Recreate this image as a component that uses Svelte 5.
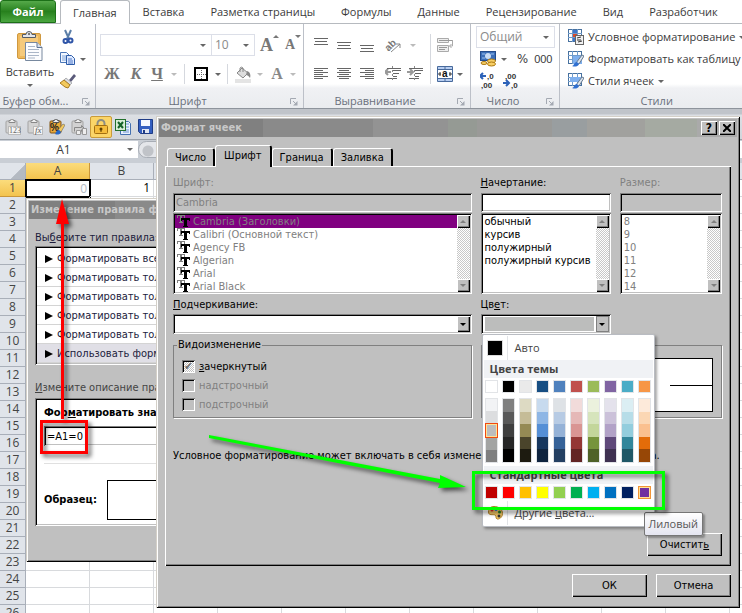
<script>
  const tabs = ["Главная", "Вставка", "Разметка страницы", "Формулы", "Данные", "Рецензирование", "Вид", "Разработчик"];
  const columns = ["A", "B", "C", "D", "E", "F", "G", "H", "I", "J", "K", "L"];
  const rows = Array.from({ length: 26 }, (_, i) => i + 1);

  const rules = [
    "Форматировать все",
    "Форматировать тол",
    "Форматировать тол",
    "Форматировать тол",
    "Форматировать тол",
    "Использовать форм",
  ];

  const dialogTabs = ["Число", "Шрифт", "Граница", "Заливка"];
  const fonts = ["Cambria (Заголовки)", "Calibri (Основной текст)", "Agency FB", "Algerian", "Arial", "Arial Black"];
  const styles = ["обычный", "курсив", "полужирный", "полужирный курсив"];
  const sizes = [8, 9, 10, 11, 12, 14];

  const theme = [
    ["#ffffff", "#f2f3f5", "#dcdddf", "#bcbdbd", "#a3a4a3", "#7f7f7f"],
    ["#000000", "#7f7f7f", "#595959", "#3f3f3f", "#262626", "#000000"],
    ["#eaeaea", "#dddac3", "#c5bc97", "#958a54", "#4a442b", "#1d1b10"],
    ["#174e83", "#c7daee", "#8eb6e5", "#558fd6", "#17375e", "#0f243f"],
    ["#4f81bd", "#dee2e6", "#b7cbe4", "#95b2d7", "#366298", "#244062"],
    ["#c0504d", "#f1dbda", "#e5b8b7", "#d99593", "#943735", "#632524"],
    ["#9bbb59", "#ebf1dd", "#d6e4bc", "#c3d69b", "#76943c", "#4f6228"],
    ["#8064a2", "#e4e2ec", "#cbc1d9", "#b2a2c7", "#5f497a", "#3f3151"],
    ["#4bacc6", "#dbeef3", "#b7dde8", "#93cddd", "#32869b", "#205867"],
    ["#f79646", "#fdeada", "#fbd7b4", "#fac08f", "#e36c09", "#974706"],
  ];
  const standard = ["#c00000", "#ff0000", "#ffc000", "#ffff00", "#92d050", "#00b050", "#00b0f0", "#0070c0", "#002060", "#7030a0"];

  let activeTab = "Шрифт";
  let formula = "=A1=0";
</script>

{#snippet launcher()}
  <button class="launcher" aria-label="Параметры">
    <svg width="8" height="8" viewBox="0 0 8 8"><path d="M0.500 6V0.500H6M3 3l3 3" fill="none" stroke="#a4a9b2" /><path d="M7.500 3v4.500H3z" fill="#a4a9b2" /></svg>
  </button>
{/snippet}

{#snippet lines(spans)}
  <svg width="14" height="16" viewBox="0 0 14 16" shape-rendering="crispEdges">
    {#each spans as [x, y, w]}
      <rect {x} {y} width={w} height="1" fill="#666" />
    {/each}
  </svg>
{/snippet}

{#snippet scrollbar()}
  <div class="scroll">
    <button tabindex="-1" aria-label="Вверх"><i class="tri up"></i></button>
    <button tabindex="-1" aria-label="Вниз"><i class="tri"></i></button>
  </div>
{/snippet}

{#snippet clipboard()}
  <rect x="1" y="2" width="11" height="12" rx="1" fill="#d2d2d2" stroke="#a3a3a3" />
  <path d="M4 3.500V1.500H5.500a1.500 1.500 0 0 1 3 0H10v2z" fill="#eee" stroke="#888" />
{/snippet}

<main>
  <nav class="tabs">
    <button class="file">Файл</button>
    {#each tabs as tab, i}
      <button class:current={i === 0}>{tab}</button>
    {/each}
  </nav>

  <section class="ribbon">
    <div class="group clip">
      <div class="body">
        <button class="paste">
          <svg width="26" height="32" viewBox="0 0 26 32">
            <rect x="0.500" y="3.500" width="23" height="25" rx="1.500" fill="#efb95c" stroke="#cf983f" />
            <rect x="3" y="6" width="18" height="20" fill="#f5ca7c" />
            <path d="M5.500 7.500v-3H9a3 3 0 0 1 6 0h3.500v3z" fill="#e3e6ea" stroke="#555c66" />
            <circle cx="12" cy="4" r="1" fill="#555" />
            <path d="M8.500 12.500H20l5 5v13H8.500z" fill="#fbfcfe" stroke="#78899f" />
            <path d="M20 12.500v5h5" fill="#d6deea" stroke="#5c7394" />
            <path d="M11 16.500h7M11 19.500h11M11 22.500h11M11 25.500h11M11 28h7" stroke="#aab6c8" />
          </svg>
          <span>Вставить</span>
          <i class="arr"></i>
        </button>
        <div class="mini">
          <button aria-label="Вырезать">
            <svg width="16" height="16" viewBox="0 0 16 16">
              <path d="M5 1l4 9M11 1l-4 9" stroke="#5c7fa8" stroke-width="2" />
              <circle cx="5.500" cy="12" r="2" fill="none" stroke="#2f55a8" stroke-width="2" />
              <circle cx="10.500" cy="11.500" r="2" fill="none" stroke="#2f55a8" stroke-width="2" />
            </svg>
          </button>
          <button aria-label="Копировать">
            <svg width="16" height="16" viewBox="0 0 16 16">
              <path d="M0.500 1.500h6l3 3v7h-9z" fill="#f2f7ff" stroke="#4b77b8" />
              <path d="M2 5h5M2 7h5M2 9h4" stroke="#7da2d8" />
              <path d="M6.500 4.500h5l3 3v6h-8z" fill="#dfeaff" stroke="#2d5ca8" />
              <path d="M8 8h4M8 10h5M8 12h5" stroke="#4b77c8" />
            </svg>
            <i class="arr"></i>
          </button>
          <button aria-label="Формат по образцу">
            <svg width="16" height="16" viewBox="0 0 16 16">
              <path d="M9 7l5-6 2 2-5 6z" fill="#5a5a7a" />
              <path d="M6 5l6 5-2 2-6-5z" fill="#d8dbe2" stroke="#777" stroke-width="0.500" />
              <path d="M4 7l6 5-2 3-3-1-5-4z" fill="#f2c95c" stroke="#a87a22" />
            </svg>
          </button>
        </div>
      </div>
      <h2>Буфер обм...{@render launcher()}</h2>
    </div>

    <div class="group font">
      <div class="body">
        <div class="line">
          <label class="box name"><select aria-label="Шрифт"><option></option></select><i class="arr"></i></label>
          <label class="box size"><select aria-label="Размер"><option>10</option></select><i class="arr"></i></label>
          <button class="serif big" aria-label="Увеличить размер">A<sup></sup></button>
          <button class="serif small" aria-label="Уменьшить размер">A<sup class="down"></sup></button>
        </div>
        <div class="line second">
          <button class="serif w28">Ж</button>
          <button class="serif w20"><em>К</em></button>
          <button class="serif w22"><u>Ч</u></button>
          <button class="w12 pale" aria-label="Подчеркивание"><i class="arr"></i></button>
          <hr />
          <button class="w24" aria-label="Границы">
            <svg width="14" height="14" viewBox="0 0 14 14" shape-rendering="crispEdges">
              <rect x="1" y="1" width="12" height="12" fill="#fff" stroke="#000" stroke-width="2" />
              <path d="M7.500 3v9M3 7.500h9" stroke="#666" stroke-dasharray="1 1" />
            </svg>
          </button>
          <button class="w10" aria-label="Вид границы"><i class="arr"></i></button>
          <hr />
          <button class="w22" aria-label="Заливка">
            <svg width="17" height="17" viewBox="0 0 17 17">
              <rect x="0" y="13" width="16" height="4" fill="#e4e4e4" />
              <path d="M2 7l5-5 6 5-5 5z" fill="#ddd" stroke="#888" />
              <path d="M5 6V2a2 2 0 0 1 3 0v4" fill="none" stroke="#888" />
              <path d="M12 5c3 1 4 4 3 7-1-2-3-3-4-3z" fill="#888" />
            </svg>
          </button>
          <button class="w12 pale" aria-label="Цвет заливки"><i class="arr"></i></button>
          <button class="serif w22 gray">A</button>
          <button class="w10 pale" aria-label="Цвет текста"><i class="arr"></i></button>
        </div>
      </div>
      <h2>Шрифт{@render launcher()}</h2>
    </div>

    <div class="group align">
      <div class="body">
        <div class="cluster">
          <div class="line">
            <button aria-label="По верхнему краю">{@render lines([[0, 1, 14], [1, 4, 12], [0, 7, 14]])}</button>
            <button aria-label="Посередине">{@render lines([[0, 5, 14], [1, 8, 12], [0, 11, 14]])}</button>
            <button aria-label="По нижнему краю">{@render lines([[0, 8, 14], [1, 11, 12], [0, 14, 14]])}</button>
            <button class="orient" aria-label="Ориентация">
              <svg width="16" height="16" viewBox="0 0 16 16">
                <text x="0" y="12" transform="rotate(-45 5 9)" font-family="Liberation Sans" font-size="10" font-weight="bold" fill="#777">ab</text>
                <path d="M6 15l9-8M11 7h4v4" fill="none" stroke="#888" />
              </svg>
            </button>
            <button class="pale" aria-label="Вид ориентации"><i class="arr"></i></button>
          </div>
          <div class="line second">
            <button aria-label="По левому краю">{@render lines([[0, 2, 14], [0, 4, 9], [0, 6, 14], [0, 8, 9], [0, 10, 14], [0, 12, 9]])}</button>
            <button aria-label="По центру">{@render lines([[0, 2, 14], [2, 4, 10], [0, 6, 14], [2, 8, 10], [0, 10, 14], [2, 12, 10]])}</button>
            <button aria-label="По правому краю">{@render lines([[0, 2, 14], [5, 4, 9], [0, 6, 14], [5, 8, 9], [0, 10, 14], [5, 12, 9]])}</button>
            {#each ["M6 6H0m3-3L0 6l3 3", "M0 6h6M3 3l3 3-3 3"] as d}
              <button aria-label="Отступ">
                <svg width="16" height="16" viewBox="0 0 16 16">
                  <path {d} fill="none" stroke="#999" stroke-width="2" />
                  <path d="M2 2.500h14M8 4.500h8M8 7.500h6M8 10.500h4M2 12.500h10" stroke="#666" />
                  <path d="M7.500 0v16" stroke="#888" stroke-dasharray="2 2" />
                </svg>
              </button>
            {/each}
          </div>
        </div>
        <hr />
        <div class="cluster last">
          <div class="line">
            <button aria-label="Перенос текста">
              <svg width="17" height="16" viewBox="0 0 17 16">
                <path d="M0.500 1.500h11v4H.5zM0.500 8.500h11v6H.5z" fill="#eee" stroke="#aaa" />
                <path d="M2 3.500h13M2 10.500h8M2 12.500h6" stroke="#999" />
                <path d="M15.500 3v6h-3m2-2l-2 2 2 2" fill="none" stroke="#aaa" />
              </svg>
            </button>
          </div>
          <div class="line second">
            <button aria-label="Объединить">
              <svg width="16" height="16" viewBox="0 0 16 16">
                <path d="M0.500 0.500h15v15H.5z" fill="#b7cdf0" stroke="#486a9c" />
                <path d="M0 3.500h16M0 12.500h16M8 1v3M8 13v3" stroke="#486a9c" />
                <rect x="1" y="4" width="14" height="8" fill="#fff" />
                <text x="5" y="11" font-family="Liberation Sans" font-size="10" font-weight="bold" fill="#111">a</text>
                <path d="M1 8h3M12 8h3M3 6v4M13 6v4" stroke="#333" />
              </svg>
              <i class="arr"></i>
            </button>
          </div>
        </div>
      </div>
      <h2>Выравнивание{@render launcher()}</h2>
    </div>

    <div class="group number">
      <div class="body">
        <label class="box"><select aria-label="Формат"><option>Общий</option></select><i class="arr"></i></label>
        <div class="line">
          <button aria-label="Денежный">
            <svg width="17" height="16" viewBox="0 0 17 16">
              <rect x="0.500" y="0.500" width="15" height="9" fill="#3d70ba" stroke="#244c8c" />
              <circle cx="8" cy="5" r="3" fill="#c9dcf5" /><path d="M2 3h3M11 3h3M2 7h3" stroke="#9cc0ee" />
              <ellipse cx="11.500" cy="10" rx="4" ry="2" fill="#f7ce65" stroke="#ad7a14" />
              <ellipse cx="11.500" cy="13" rx="4" ry="2" fill="#f7ce65" stroke="#ad7a14" />
              <ellipse cx="4" cy="12" rx="3" ry="1.500" fill="#f7ce65" stroke="#ad7a14" />
            </svg>
            <i class="arr"></i>
          </button>
          <button class="pct">%</button>
          <button class="pct">000</button>
        </div>
        <div class="line">
          {#each [["M6 4H0m3-3L0 4l3 3", 7, 7, ",0", 1, 16, ",00"], ["M6 11H0m3-3l3 3-3 3", 2, 7, ",00", 8, 16, ",0"]] as [d, x1, y1, t1, x2, y2, t2]}
            <button aria-label="Разрядность">
              <svg width="17" height="18" viewBox="0 0 17 18" font-family="Liberation Sans" font-size="8" font-weight="bold" fill="#333">
                <path {d} fill="none" stroke="#2c62b8" stroke-width="2" />
                <text x={x1} y={y1}>{t1}</text><text x={x2} y={y2}>{t2}</text>
              </svg>
            </button>
          {/each}
        </div>
      </div>
      <h2>Число{@render launcher()}</h2>
    </div>

    <div class="group styles">
      <div class="body">
        {#each ["Условное форматирование", "Форматировать как таблицу", "Стили ячеек"] as label, i}
          <button>
            <svg width="16" height="16" viewBox="0 0 16 16">
              <rect x="0.500" y="0.500" width="13" height="12" fill="#fff" stroke="#47719f" />
              <path d="M0 4.500h14M0 8.500h14M4.500 0v13M9.500 0v13" stroke="#6f9bcb" />
              {#if i === 0}
                <path d="M5 1h4v3H5zM5 9h4v3H5z" fill="#3f75c8" /><path d="M5 5h4v3H5z" fill="#dd4a2a" />
                <rect x="7.500" y="6.500" width="8" height="9" fill="#f2f2f2" stroke="#666" />
                <path d="M9 9l4-1M9 11h4M10 13l4-1" stroke="#333" />
              {:else}
                <path d={i === 1 ? "M5 5h9v8H5z" : "M2 4h11v5H2z"} fill="#7fb0ee" />
                <path d="M8 12l6-8 2 1-5 8z" fill="#dce5f0" stroke="#66788c" />
                <path d="M4 15c2 0 2-4 5-4l2 2c-1 3-5 3-7 2z" fill="#2f6fd0" />
              {/if}
            </svg>
            {label}
            {#if i !== 1}<i class="arr"></i>{/if}
          </button>
        {/each}
      </div>
      <h2>Стили</h2>
    </div>
  </section>

  <section class="quick">
    <button aria-label="Вставить значения">
      <svg width="16" height="16" viewBox="0 0 16 16">{@render clipboard()}<rect x="3.500" y="7.500" width="12" height="8" fill="#f5f5f5" stroke="#bbb" /><text x="4" y="14" font-family="Liberation Serif" font-size="8" fill="#666">123</text></svg>
    </button>
    <button aria-label="Вставить формулы">
      <svg width="16" height="16" viewBox="0 0 16 16">{@render clipboard()}<rect x="6.500" y="7.500" width="9" height="8" fill="#f5f5f5" stroke="#bbb" /><text x="8" y="14" font-family="Liberation Serif" font-style="italic" font-size="9" fill="#555">fx</text></svg>
    </button>
    <button aria-label="Вставить форматы">
      <svg width="16" height="16" viewBox="0 0 16 16">
        <rect x="1" y="2" width="11" height="12" rx="1" fill="#e8a93a" stroke="#80551a" />
        <path d="M4 3.500V1.500H5.500a1.500 1.500 0 0 1 3 0H10v2z" fill="#eee" stroke="#555" />
        <text x="1" y="12" font-family="Liberation Sans" font-size="10" font-weight="bold" fill="#222">%</text>
        <path d="M9 11l5-6 2 1-4 7z" fill="#f3ca60" stroke="#555" stroke-width="0.500" /><path d="M6 15c1-1 1-4 4-4l2 2c-1 3-4 3-6 2z" fill="#2768c8" />
      </svg>
    </button>
    <button aria-label="Транспонировать">
      <svg width="16" height="16" viewBox="0 0 16 16">{@render clipboard()}<path d="M3.500 12.500v-4h7v-2l3 3-3 3v-2" fill="none" stroke="#888" /><path d="M5.500 11.500h4v4h-4zM11.500 9.500h4v6h-4z" fill="#eee" stroke="#999" /></svg>
    </button>
    <button class="on" aria-label="Защита">
      <svg width="14" height="16" viewBox="0 0 14 16">
        <path d="M3.500 7V4.500a3.500 3.500 0 0 1 7 0V7" fill="none" stroke="#8d8d84" stroke-width="2" />
        <rect x="0.500" y="6.500" width="13" height="8" rx="1" fill="#f5bd3c" stroke="#a36f10" /><circle cx="7" cy="10" r="1.500" fill="#604000" /><path d="M7 10v3" stroke="#604000" />
      </svg>
    </button>
    <button aria-label="Книга">
      <svg width="17" height="16" viewBox="0 0 17 16">
        <path d="M5.500 2.500h8l2 2v11h-10z" fill="#e8f0ff" stroke="#4470b0" /><path d="M8 5h6M8 8h6M8 11h6M8 13h6" stroke="#6d93cf" />
        <rect x="0.500" y="0.500" width="10" height="11" fill="#d7edd7" stroke="#23702c" /><path d="M3 3l5 6M8 3L3 9" stroke="#16642a" stroke-width="2" />
      </svg>
    </button>
    <button aria-label="Сохранить">
      <svg width="15" height="15" viewBox="0 0 15 15"><path d="M0.500 0.500h14v14h-12l-2-2z" fill="#345fc0" stroke="#1f3c86" /><rect x="3" y="1" width="9" height="6" fill="#f5f8ff" /><rect x="4" y="10" width="7" height="4" fill="#dfe5f2" /><rect x="5" y="11" width="2" height="3" fill="#1f3c86" /></svg>
    </button>
  </section>

  <section class="formula-bar">
    <label class="cell-name"><input value="A1" aria-label="Имя ячейки" /><i class="arr"></i></label>
    <span class="knob"></span>
    <input class="entry" aria-label="Строка формул" />
  </section>

  <div class="sheet">
    <table>
      <thead>
        <tr><th class="corner"></th>{#each columns as c}<th class:sel={c === "A"}>{c}</th>{/each}</tr>
      </thead>
      <tbody>
        {#each rows as r}
          <tr>
            <th class:sel={r === 1}>{r}</th>
            {#each columns as c}
              <td class:cursor={r === 1 && c === "A"}>{r !== 1 ? "" : c === "A" ? "0" : c === "B" ? "1" : ""}</td>
            {/each}
          </tr>
        {/each}
      </tbody>
    </table>
  </div>

  <section class="window rule">
    <header>Изменение правила ф</header>
    <div class="rule-body">
      <p>Вы<u>б</u>ерите тип правила:</p>
      <ul class="sunken">
        {#each rules as rule, i}
          <li class:picked={i === 5}><i></i>{rule}</li>
        {/each}
      </ul>
      <p class="second-title"><u>И</u>змените описание прав</p>
      <div class="sunken describe">
        <label for="formula">Фор<u>м</u>атировать зна</label>
        <input id="formula" class="sunken" bind:value={formula} />
        <div class="preview"><span>Образец:</span><div class="sample"></div></div>
      </div>
    </div>
  </section>

  <section class="window format">
    <header>
      <span>Формат ячеек</span>
      <button class="raised" aria-label="Справка">?</button>
      <button class="raised" aria-label="Закрыть"><svg width="8" height="8" viewBox="0 0 8 8"><path d="M0 0l8 8M8 0L0 8" stroke="#000" stroke-width="2" /></svg></button>
    </header>

    <div class="tablist">
      {#each dialogTabs as tab}
        <button class:active={tab === activeTab} on:click={() => (activeTab = tab)}>{tab}</button>
      {/each}
    </div>

    <div class="panel raised">
      <div class="fields">
        <div class="field off">
          <label for="font">Шрифт:</label>
          <input id="font" class="sunken" value="Cambria" disabled />
          <div class="list sunken">
            <ul>
              {#each fonts as f, i}
                <li class:marked={i === 0}>
                  <svg width="13" height="12" viewBox="0 0 13 12" shape-rendering="crispEdges">
                    <path d="M0 0h8v3H7V1H5v6h1v1H2V7h1V1H1v2H0z" fill="#808080" />
                    <path d="M4 3h9v3h-1V5h-2v6h1v1H6v-1h1V5H5v1H4z" fill="#000" />
                  </svg>{f}
                </li>
              {/each}
            </ul>
            {@render scrollbar()}
          </div>
        </div>

        <div class="field">
          <label for="style"><u>Н</u>ачертание:</label>
          <input id="style" class="sunken" />
          <div class="list sunken">
            <ul>{#each styles as s}<li>{s}</li>{/each}</ul>
            {@render scrollbar()}
          </div>
        </div>

        <div class="field off">
          <label for="size">Размер:</label>
          <input id="size" class="sunken" disabled />
          <div class="list sunken">
            <ul>{#each sizes as s}<li>{s}</li>{/each}</ul>
            {@render scrollbar()}
          </div>
        </div>

        <div class="field">
          <label for="underline"><u>П</u>одчеркивание:</label>
          <div class="combo sunken">
            <select id="underline"><option></option></select>
            <span class="drop raised"><i class="tri"></i></span>
          </div>
        </div>

        <div class="field color">
          <label for="color">Цв<u>е</u>т:</label>
          <button id="color" class="combo sunken" aria-label="Цвет">
            <span class="chip"></span>
            <span class="drop flat"><i class="tri"></i></span>
          </button>

          <div class="palette">
            <button class="auto"><span class="icon"><i class="black"></i></span>Авто</button>
            <h3>Цвета темы</h3>
            <div class="swatches">
              {#each theme as shades}
                <button class="swatch" style="background: {shades[0]}" aria-label={shades[0]}></button>
              {/each}
            </div>
            <div class="swatches shades">
              {#each theme as shades, i}
                <div>
                  {#each shades.slice(1) as shade, k}
                    <button class:chosen={i === 0 && k === 2} style="background: {shade}" aria-label={shade}></button>
                  {/each}
                </div>
              {/each}
            </div>
            <h3>Стандартные цвета</h3>
            <div class="swatches">
              {#each standard as color, i}
                <button class="swatch" class:hover={i === 9} style="background: {color}" aria-label={color}></button>
              {/each}
            </div>
            <button class="more">
              <span class="icon">
                <svg width="15" height="14" viewBox="0 0 15 14"><path d="M6 .5c5 0 8.500 3 8.500 7S11 13.500 9 13c-2-1 0-3-2-4S.5 10 .5 6 3 .5 6 .5z" fill="#f3c766" stroke="#b1842c" /><circle cx="4" cy="4" r="1.500" fill="#d22" /><circle cx="8" cy="3.500" r="1.500" fill="#236bd0" /><circle cx="11.500" cy="6" r="1.500" fill="#282" /><circle cx="11" cy="10" r="1.500" fill="#333" /></svg>
              </span>
              <span>Другие <u>ц</u>вета...</span>
            </button>
            <span class="tooltip">Лиловый</span>
          </div>
        </div>
      </div>

      <div class="fields frames">
        <fieldset>
          <legend>Видоизменение</legend>
          <label><input type="checkbox" class="mixed" checked /><span><u>з</u>ачеркнутый</span></label>
          <label class="off"><input type="checkbox" disabled /><span>надстрочный</span></label>
          <label class="off"><input type="checkbox" disabled /><span>подстрочный</span></label>
        </fieldset>
        <fieldset class="view"><div><i></i></div></fieldset>
      </div>

      <p class="note">Условное форматирование может включать в себя изменение шрифта, начертания и цвета.</p>
      <div class="actions"><button class="raised">Очистит<u>ь</u></button></div>
    </div>

    <footer>
      <button class="raised">ОК</button>
      <button class="raised">Отмена</button>
    </footer>
  </section>

  <svg class="marks" width="742" height="613" viewBox="0 0 742 613">
    <g fill="#f00">
      <path d="M61 419V224h-5l6-25 7 25h-5v195z" />
      <rect x="41.500" y="421.500" width="45" height="31" fill="none" stroke="#f00" stroke-width="3" />
    </g>
    <g fill="#0f0">
      <path d="M209 435l231 44v-4l26 12-28 1 2-5-231-45z" />
      <rect x="473.500" y="472.500" width="190" height="36" fill="none" stroke="#0f0" stroke-width="3" />
    </g>
  </svg>
</main>

<style>
  :global(body) {
    margin: 0;
  }

  main {
    position: relative;
    height: 100vh;
    overflow: hidden;
    display: flex;
    flex-direction: column;
    background: #fff;
    font: 11px/16px "Open Sans", "Noto Sans", sans-serif;
    color: #3b3b3b;
  }

  main * {
    box-sizing: border-box;
  }

  button,
  input,
  select {
    font: inherit;
    color: inherit;
    margin: 0;
    padding: 0;
    border: 0;
    background: none;
    border-radius: 0;
    outline: 0;
  }

  select {
    appearance: none;
    width: 100%;
    height: 100%;
  }

  ul,
  p,
  h2,
  h3 {
    margin: 0;
    padding: 0;
    list-style: none;
    font-weight: normal;
  }

  svg {
    display: block;
    flex: none;
  }

  .arr {
    flex: none;
    border: 3px solid transparent;
    border-top-color: #666;
    border-bottom: 0;
  }

  .pale .arr {
    border-top-color: #bbb;
  }

  /* ribbon tabs */
  .tabs {
    display: flex;
    flex: none;
    height: 24px;
    border-bottom: 1px solid #b6babf;
    white-space: nowrap;
  }

  .tabs button {
    flex: none;
    padding: 0 13px;
    height: 24px;
  }

  .tabs .file {
    width: 56px;
    padding: 0;
    margin-right: 4px;
    height: 23px;
    border: 1px solid #1c7018;
    border-radius: 3px 3px 0 0;
    background: linear-gradient(#55a94a, #27801d 50%, #4aa640);
    color: #fff;
    font-weight: bold;
  }

  .tabs .current {
    padding: 0 12px;
    border: 1px solid #b6babf;
    border-bottom: 0;
    border-radius: 3px 3px 0 0;
    background: #fff;
  }

  .ribbon {
    display: flex;
    flex: none;
    height: 85px;
    border-bottom: 1px solid #8e949c;
    background: linear-gradient(#fff 60px, #f0f1f4 64px, #eaecef);
    white-space: nowrap;
  }

  .group {
    flex: none;
    display: flex;
    flex-direction: column;
    border-right: 1px solid #bcc0c8;
  }

  .clip {
    width: 96px;
  }

  .font {
    width: 208px;
  }

  .align {
    width: 167px;
  }

  .number {
    width: 89px;
  }

  .styles {
    flex: 1;
    border: 0;
  }

  .group .body {
    flex: none;
    height: 68px;
  }

  .group h2 {
    position: relative;
    padding: 1px 24px 0 0;
    font-size: 11px;
    text-align: center;
    color: #6a707c;
  }

  .styles h2 {
    padding-left: 24px;
  }

  .group.styles h2 {
    padding-right: 8px;
    padding-left: 16px;
  }

  .launcher {
    position: absolute;
    right: 5px;
    top: 6px;
  }

  .clip .body {
    display: flex;
  }

  .paste {
    width: 60px;
    padding-top: 6px;
    display: flex;
    flex-direction: column;
    align-items: center;
    gap: 2px;
  }

  .paste .arr {
    margin-top: 2px;
  }

  .mini {
    display: flex;
    flex-direction: column;
    gap: 6px;
    padding-top: 5px;
  }

  .mini button {
    display: flex;
    align-items: center;
    gap: 4px;
  }

  .line {
    display: flex;
    align-items: center;
  }

  .line button {
    display: flex;
    align-items: center;
    justify-content: center;
  }

  .font .line {
    height: 22px;
    margin-top: 10px;
    padding-left: 4px;
  }

  .font .second {
    margin-top: 7px;
    padding-left: 2px;
  }

  .box {
    display: flex;
    flex: none;
    align-items: center;
    height: 22px;
    padding: 0 5px 0 3px;
    border: 1px solid #dcdfe8;
    background: #fff;
    color: #8a8a8a;
    font-size: 12px;
  }

  .box.name {
    width: 112px;
  }

  .box.size {
    width: 43px;
    border-left: 0;
  }

  .serif {
    position: relative;
    font: bold 16px/20px "Liberation Serif", serif;
    color: #777;
  }

  .serif.gray {
    color: #888;
  }

  .serif sup {
    align-self: flex-start;
    border: 3px solid transparent;
    border-top: 0;
    border-bottom-color: #777;
  }

  .serif sup.down {
    border-top: 3px solid #777;
    border-bottom: 0;
  }

  .serif.big {
    font-size: 18px;
    margin-left: 5px;
  }

  .serif.small {
    font-size: 14px;
    margin-left: 6px;
  }

  .w10 {
    width: 10px;
  }

  .w12 {
    width: 12px;
  }

  .w20 {
    width: 20px;
  }

  .w22 {
    width: 22px;
  }

  .w24 {
    width: 24px;
  }

  .w28 {
    width: 28px;
  }

  hr {
    flex: none;
    width: 1px;
    height: 20px;
    margin: 0 4px;
    border: 0;
    background: #d5d8de;
  }

  .align .body {
    display: flex;
    padding: 10px 0 0 10px;
  }

  .align .line {
    gap: 9px;
    height: 22px;
  }

  .align .second {
    gap: 9px;
    margin-top: 7px;
  }

  .align .orient {
    margin-left: 2px;
  }

  .align .second button:nth-child(4) {
    margin-left: 2px;
  }

  .align .second button:nth-child(5) {
    margin-left: -3px;
  }

  .align hr {
    height: 50px;
    margin: 0 6px 0 7px;
  }

  .align .last button {
    gap: 4px;
  }

  .number .body {
    display: flex;
    flex-direction: column;
    padding: 2px 4px 0 5px;
  }

  .number .line {
    flex: none;
    height: 22px;
    padding-left: 4px;
    gap: 6px;
  }

  .number .line button {
    gap: 4px;
  }

  .number .line .pct {
    margin-left: 4px;
    font: 13px/16px "DejaVu Sans Condensed", sans-serif;
  }

  .number .line .pct + .pct {
    margin-left: 0;
    font: 11px/16px "Liberation Sans", sans-serif;
  }

  .styles .body {
    display: flex;
    flex-direction: column;
    padding: 2px 0 0 8px;
  }

  .styles .body button {
    display: flex;
    flex: none;
    align-items: center;
    gap: 4px;
    height: 22px;
  }

  /* quick access and formula bar */
  .quick {
    display: flex;
    flex: none;
    align-items: center;
    gap: 6px;
    height: 30px;
    padding: 5px 5px 0;
    background: linear-gradient(#c0c4ca 5px, #dcdfe4 6px, #d2d6dc);
  }

  .quick .on {
    margin: 0 -3px;
    padding: 2px 3px;
    border: 1px solid #c99b3a;
    border-radius: 2px;
    background: #fbd568;
  }

  .formula-bar {
    display: flex;
    flex: none;
    height: 24px;
    padding: 1px 0 5px;
    border-top: 1px solid #9aa0a8;
    background: #c9ced5;
  }

  .cell-name {
    display: flex;
    align-items: center;
    width: 138px;
    padding-right: 5px;
    background: #fff;
    font-size: 12px;
  }

  .cell-name input {
    width: 100%;
    text-align: center;
  }

  .knob {
    width: 30px;
    border: 1px solid #a8adb5;
    border-radius: 9px;
    background: radial-gradient(circle at 9px 9px, #c0c3c8 5px, #e4e6ea 6px);
  }

  .formula-bar .entry {
    flex: 1;
    background: #fff;
  }

  .sheet {
    flex: 1;
    overflow: hidden;
  }

  table {
    width: 794px;
    table-layout: fixed;
    border-collapse: separate;
    border-spacing: 0;
    font-size: 12px;
    line-height: 16px;
  }

  th {
    height: 17px;
    padding: 0;
    border-right: 1px solid #a9afb9;
    border-bottom: 1px solid #a9afb9;
    background: #e0e4ea;
    font-weight: normal;
    color: #444;
  }

  .corner {
    width: 26px;
    background: linear-gradient(135deg, #e0e4ea 65%, #b4bac2 66%);
  }

  th.sel {
    background: linear-gradient(#fbdc7c, #f3c34e);
    border-color: #c9963a;
  }

  td {
    height: 17px;
    padding: 0 3px 0 0;
    border-right: 1px solid #d8dadd;
    border-bottom: 1px solid #d8dadd;
    text-align: right;
    color: #000;
  }

  td.cursor {
    color: #b5bcc4;
    border: 0;
    box-shadow: 0 0 0 1px #000, inset 0 0 0 1px #000;
  }

  /* classic windows */
  .window {
    position: absolute;
    padding: 3px;
    background: #c0c0c0;
    box-shadow: inset 1px 1px #d4d0c8, inset -1px -1px #000, inset 2px 2px #fff, inset -2px -2px #808080;
    font: 11px/14px "DejaVu Sans Condensed", "DejaVu Sans", sans-serif;
    font-stretch: condensed;
    color: #000;
    white-space: nowrap;
  }

  .window header {
    display: flex;
    align-items: center;
    height: 18px;
    padding: 0 2px;
    background: linear-gradient(90deg, #808080 18%, #8a8a8a 18% 37%, #939393 37% 50%, #959a94 50% 55%, #9a9a98 55% 68%, #999ea0 68% 74%, #a1a19e 74% 84%, #a5aaa2 84% 93%, #aaaaaa 93%);
    color: #c8c8c8;
    font-weight: bold;
  }

  .sunken {
    background: #fff;
    box-shadow: inset 1px 1px #808080, inset -1px -1px #fff, inset 2px 2px #000, inset -2px -2px #c0c0c0;
  }

  .raised {
    background: #c0c0c0;
    box-shadow: inset 1px 1px #fff, inset -1px -1px #000, inset -2px -2px #808080;
  }

  .rule {
    left: 26px;
    top: 198px;
    width: 150px;
  }

  .window.rule header {
    background: linear-gradient(90deg, #808080 60%, #8a8a8a 60%);
  }

  .rule-body {
    padding: 12px 0 33px 6px;
    color: #1c1c3c;
  }

  .rule-body ul {
    margin-top: 1px;
    padding: 3px 2px 2px;
  }

  .rule-body li {
    display: flex;
    align-items: center;
    height: 19px;
    padding: 1px 8px 0;
    border-bottom: 1px solid #d4d4d4;
  }

  .rule-body li i {
    margin-right: 4px;
    border: 4px solid transparent;
    border-left: 8px solid #000;
    border-right: 0;
  }

  .rule-body .picked {
    background: #e0dfe6;
  }

  .second-title {
    margin-top: 16px;
    color: #444;
  }

  .describe {
    margin-top: 3px;
    padding: 8px 9px;
    height: 128px;
    display: flex;
    flex-direction: column;
    color: #000;
    font-weight: bold;
  }

  .describe input {
    flex: none;
    width: 100%;
    height: 20px;
    margin-top: 6px;
    padding-left: 3px;
    font-weight: normal;
  }

  .preview {
    display: flex;
    align-items: center;
    gap: 10px;
    margin-top: 17px;
    padding-top: 16px;
    border-top: 1px solid #e0e0e0;
  }

  .sample {
    flex: 1;
    height: 40px;
    border: 1px solid #000;
  }

  .format {
    left: 156px;
    right: 2px;
    top: 116px;
  }

  .format header span {
    flex: 1;
  }

  .format header button {
    display: flex;
    align-items: center;
    justify-content: center;
    width: 16px;
    height: 14px;
    margin-left: 2px;
    color: #000;
    font-size: 12px;
  }

  .tablist {
    display: flex;
    align-items: flex-end;
    height: 29px;
    padding: 0 8px;
  }

  .tablist button {
    height: 18px;
    padding: 0 7px;
    border-left: 1px solid #fff;
    border-top: 1px solid #fff;
    border-right: 2px solid #000;
    border-radius: 3px 3px 0 0;
  }

  .tablist .active {
    position: relative;
    height: 22px;
    margin-bottom: -1px;
    padding: 0 8px 2px;
    background: #c0c0c0;
    z-index: 1;
  }

  .panel {
    margin: 0 6px;
    padding: 10px 9px 10px 8px;
  }

  .fields {
    display: grid;
    grid-template-columns: 298fr 130fr 102fr;
    gap: 4px 9px;
  }

  .field {
    display: flex;
    flex-direction: column;
    position: relative;
    min-width: 0;
  }

  .field > label {
    margin-bottom: 3px;
  }

  .field > input {
    width: 100%;
    height: 19px;
    padding: 0 3px;
  }

  .field .list {
    display: flex;
    height: 81px;
    margin-top: 1px;
    padding: 2px;
  }

  .list ul {
    flex: 1;
    overflow: hidden;
  }

  .list li {
    display: flex;
    gap: 3px;
    height: 13px;
    line-height: 13px;
    padding: 0 2px;
  }

  .off {
    color: #808080;
  }

  .off > .sunken:disabled {
    background: #c0c0c0;
  }

  .list .marked {
    background: #800080;
  }

  .scroll {
    width: 13px;
    display: flex;
    flex-direction: column;
    justify-content: space-between;
    background: repeating-conic-gradient(#fff 0 25%, #c8c8c8 0 50%) 0 0 / 2px 2px;
  }

  .scroll button {
    display: flex;
    align-items: center;
    justify-content: center;
    height: 13px;
    background: #c0c0c0;
    box-shadow: inset 1px 1px #fff, inset -1px -1px #000, inset -2px -2px #808080;
  }

  .tri {
    border: 3px solid transparent;
    border-top-color: #000;
    border-bottom: 0;
  }

  .scroll .tri {
    border-top-color: #808080;
  }

  .scroll .up {
    border-top: 0;
    border-bottom: 3px solid #808080;
  }

  .combo {
    display: flex;
    width: 100%;
    height: 20px;
    padding: 2px;
  }

  .field .combo {
    margin-top: -1px;
  }

  .combo .drop {
    display: flex;
    align-items: center;
    justify-content: center;
    flex: none;
    width: 13px;
  }

  .drop.flat {
    border: 1px solid #808080;
    background: #c0c0c0;
  }

  .chip {
    flex: 1;
    align-self: stretch;
    margin: 1px 2px;
    background: #bcbdbc;
  }

  .frames {
    padding-top: 4px;
  }

  fieldset {
    min-width: 0;
    height: 80px;
    margin: 0;
    padding: 5px 8px 0;
    border: 1px solid #808080;
    box-shadow: 1px 1px #fff;
  }

  legend {
    margin-left: -5px;
    padding: 0 1px;
    background: #c0c0c0;
  }

  fieldset label {
    display: flex;
    align-items: center;
    gap: 4px;
    height: 19px;
  }

  fieldset input {
    appearance: none;
    width: 13px;
    height: 13px;
    background: #c0c0c0;
    box-shadow: inset 1px 1px #808080, inset -1px -1px #fff, inset 2px 2px #000;
  }

  .mixed {
    display: flex;
    align-items: center;
    justify-content: center;
    background: repeating-conic-gradient(#fff 0 25%, #c0c0c0 0 50%) 0 0 / 2px 2px;
  }

  .mixed::after {
    content: "✔";
    font-size: 11px;
    line-height: 12px;
    color: #707070;
  }

  .view {
    grid-column: 2 / 4;
    align-self: end;
    height: 73px;
    padding: 12px 8px 6px;
  }

  .view div {
    display: flex;
    align-items: center;
    justify-content: flex-end;
    height: 54px;
    border: 1px solid #000;
    background: #fff;
  }

  .view i {
    width: 42px;
    border-top: 1px solid #000;
  }

  .note {
    margin-top: 31px;
  }

  .actions,
  footer {
    display: flex;
    justify-content: flex-end;
    gap: 9px;
  }

  .actions {
    margin-top: 70px;
  }

  footer {
    padding: 8px 6px;
  }

  .actions button,
  footer button {
    width: 75px;
    height: 23px;
  }

  /* colour menu */
  .palette {
    position: absolute;
    z-index: 2;
    left: 1px;
    top: 100%;
    width: 173px;
    padding: 1px;
    border: 1px solid #b9bcc2;
    border-radius: 2px;
    background: #fff;
    box-shadow: 2px 2px 3px rgba(0, 0, 0, 0.35);
    font: 11px/16px "Open Sans", "Noto Sans", sans-serif;
    font-stretch: normal;
    color: #444;
  }

  .palette h3 {
    height: 18px;
    padding: 1px 6px;
    background: #f0f2f5;
    font-size: 11px;
    font-weight: bold;
  }

  .auto,
  .more {
    display: flex;
    align-items: center;
    gap: 7px;
    width: 100%;
    height: 24px;
  }

  .icon {
    display: flex;
    align-items: center;
    justify-content: center;
    width: 24px;
    height: 100%;
    border-right: 1px solid #e2e4e7;
  }

  .black {
    width: 16px;
    height: 16px;
    border: 1px solid #ddd;
    background: #000;
  }

  .swatches {
    display: flex;
    gap: 4px;
    padding: 2px 1px;
  }

  .swatch {
    width: 13px;
    height: 13px;
    border: 1px solid #e2e4e7;
  }

  .shades {
    padding: 3px 1px;
  }

  .shades div {
    display: flex;
    flex-direction: column;
    width: 13px;
    height: 65px;
    border: 1px solid #e2e4e7;
  }

  .shades button {
    flex: 1;
  }

  .shades .chosen {
    margin: 0 -1px;
    border: 1px solid #f04a10;
    box-shadow: inset 0 0 0 1px #ffe294;
  }

  .swatch.hover {
    border-color: #f29436;
    box-shadow: inset 0 0 0 1px #ffe294;
  }

  .tooltip {
    position: absolute;
    left: 161px;
    top: 177px;
    padding: 3px 4px;
    border: 1px solid #767676;
    border-radius: 2px;
    background: linear-gradient(#fff, #e4e5f0);
    box-shadow: 2px 2px 2px rgba(0, 0, 0, 0.3);
    color: #575757;
  }

  /* hand-drawn pointers over the windows */
  .marks {
    position: absolute;
    left: 0;
    top: 0;
    pointer-events: none;
    z-index: 5;
    filter: drop-shadow(3px 3px 2px rgba(0, 0, 0, 0.6));
  }
</style>
